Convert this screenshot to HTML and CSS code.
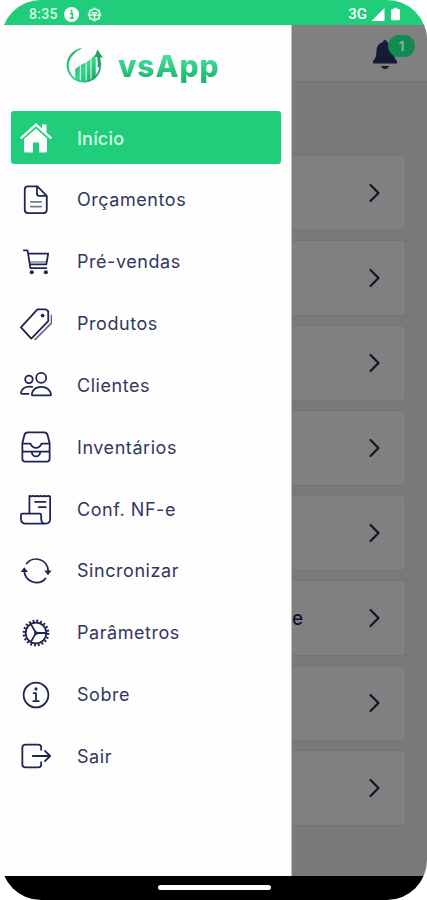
FILE: index.html
```html
<!DOCTYPE html>
<html lang="pt-BR">
<head>
    <meta charset="UTF-8">
    <meta name="viewport" content="width=device-width, initial-scale=1.0">
    <title>vsApp</title>
    <link rel="stylesheet" href="styles.css">
</head>
<body>
    <div class="phone">
        <header class="status-bar">
            <span class="time">8:35</span>
            <svg class="status-icon info" viewBox="0 0 16 16"><circle cx="8" cy="8" r="8" fill="#fff"/><path d="M6.3 6.7h2.5v5M6 12h4.5" stroke="#20cd7b" stroke-width="1.8" fill="none"/><circle cx="8" cy="4" r="1.2" fill="#20cd7b"/></svg>
            <svg class="status-icon" viewBox="0 0 16 16" fill="none" stroke="#e6fff2" stroke-width="1.6"><circle cx="8" cy="8" r="5.8"/><path d="M.8 8.500H6M10 8.500h5.200M8 10v5.500M5 6h6M8 .5v2M2.500 3l1.200 1.200M13.500 3l-1.200 1.200M2.500 13l1.200-1.200M13.500 13l-1.200-1.200"/><rect x="6.500" y="7.500" width="3" height="2.500" fill="#e6fff2" stroke="none"/></svg>
            <span class="network">3G</span>
            <svg class="signal" viewBox="0 0 14 14"><path d="M0 14L14 0v14z" fill="#fff"/></svg>
            <svg class="battery" viewBox="0 0 10 14"><path d="M3 0h4v1.500h1.500q1.500 0 1.500 1.500v9.500q0 1.500-1.500 1.500h-7Q0 14 0 12.500V3q0-1.500 1.500-1.500H3z" fill="#fff"/></svg>
        </header>

        <div class="screen">
            <aside class="drawer">
                <div class="brand">
                    <svg class="logo" viewBox="0 0 38 38">
                        <defs>
                            <linearGradient id="leaf" x1="0" y1="0" x2="1" y2="1">
                                <stop offset="0" stop-color="#17a967"/>
                                <stop offset=".5" stop-color="#35d88b"/>
                                <stop offset="1" stop-color="#179a60"/>
                            </linearGradient>
                        </defs>
                        <path d="M17 1A17.800 17.800 0 1 0 35.800 15l-2.300 0A15.600 15.600 0 1 1 8 7.500Q12 3 17 1z" fill="url(#leaf)"/>
                        <path d="M9.500 22.500l4.700-3.500v16l-4.700-2.500zM15.200 18.500l5-2.500v20.200l-5-1zM21.200 15.500l4-3v22.500l-4 1.200zM26.200 11.500l4.300-4v24l-4.300 3.200z" fill="url(#leaf)"/>
                        <path d="M29.500 10L32.200 2.500 38 11l-2.800-.6q1 6-1.200 10.600l-1.700-.5q.7-5-.3-10.300z" fill="#1ba468"/>
                    </svg>
                    <span class="brand-name">vsApp</span>
                </div>

                <nav class="menu">
                    <a class="item active">
                        <svg class="icon home" viewBox="0 0 32 32"><path d="M16 1l6 5.500V2.500h4.500v8L32 15.500 30.500 17.200 16 4.200 1.500 17.200 0 15.500z"/><path d="M16 6.500l11 10V29q0 1.500-1.500 1.500H19V20.500h-6v10H5.500Q4 30.500 4 29V17z"/></svg>
                        <span>Início</span>
                    </a>
                    <a class="item">
                        <svg class="icon" viewBox="0 0 32 32"><path d="M17.500 1.500H7.500Q4 1.500 4 5v21.500Q4 30 7.500 30h16.500q3.500 0 3.500-3.500V11.500zM17 1.500V9q0 2.500 2.500 2.500h8"/><path d="M10.500 18h11M10.500 23h11" opacity=".6"/></svg>
                        <span>Orçamentos</span>
                    </a>
                    <a class="item">
                        <svg class="icon" viewBox="0 0 32 32"><path d="M3 3.500h4l3 19h17M8 7h21l-2 11.500H9.500"/><path d="M10 16h17" opacity=".4"/><circle cx="11.500" cy="27" r="2.200" class="solid"/><circle cx="26.500" cy="27" r="2.200" class="solid"/></svg>
                        <span>Pré-vendas</span>
                    </a>
                    <a class="item">
                        <svg class="icon wide" viewBox="0 0 34 34"><path d="M18.500 1.500h9l2.500 2v10.500L12 32.500 1 20.500z"/><path d="M33.500 8v8L16 33.500" opacity=".7"/><circle cx="24" cy="8" r="2" class="solid"/></svg>
                        <span>Produtos</span>
                    </a>
                    <a class="item">
                        <svg class="icon wide" viewBox="0 0 34 34"><circle cx="22.500" cy="9.500" r="5.300"/><path d="M12.500 27q1.500-8 10-8t10.500 8q0 1-1.500 1H14q-1.500 0-1.500-1z"/><circle cx="9.500" cy="11" r="4"/><path d="M13 19Q3 17.500 1 25q0 1.500 1.500 1.500H9"/></svg>
                        <span>Clientes</span>
                    </a>
                    <a class="item">
                        <svg class="icon wide" viewBox="0 0 34 34"><path d="M2.500 13L4.500 5Q5 1.500 8.500 1.500h17Q29 1.500 29.500 5l2 8v7q0 2-2 2h-25q-2 0-2-2zM2.500 13.500H11q2 4.500 6 4.500t6-4.500h8.500M2.500 22v7.500q0 3 3 3h23q3 0 3-3V22M12.500 23q1 4 4.500 4t4.500-4"/></svg>
                        <span>Inventários</span>
                    </a>
                    <a class="item">
                        <svg class="icon wide" viewBox="0 0 34 34"><path d="M10 22V3l2 .6 2-.6 2 .6 2-.6 2 .6 2-.6 2 .6 2-.6 2 .6 2-.6 2 .6V28q0 4.500-4.500 4.500H6Q1.500 32.500 1 28v-4.500Q1 22 2.500 22H21q1.500 0 1.500 1.500V28q0 4.500 4.500 4.500"/><path d="M16 9.500h11M20 15h7.500"/></svg>
                        <span>Conf. NF-e</span>
                    </a>
                    <a class="item">
                        <svg class="icon wide" viewBox="0 0 34 34"><path d="M7 9a13 13 0 0 1 23 8M27 25A13 13 0 0 1 4.500 17"/><path d="M.8 18l3.700-5 4 5zM25.800 16.500l4 5 3.700-5z" class="solid"/></svg>
                        <span>Sincronizar</span>
                    </a>
                    <a class="item">
                        <svg class="icon" viewBox="0 0 32 32"><circle cx="16" cy="16" r="11"/><circle cx="16" cy="16" r="13" class="teeth"/><circle cx="16" cy="16" r="2" class="solid"/><path d="M16 16h11M16 16L10.500 6.500M16 16l-5.500 9.500"/></svg>
                        <span>Parâmetros</span>
                    </a>
                    <a class="item">
                        <svg class="icon" viewBox="0 0 32 32"><circle cx="16" cy="16" r="13.200"/><path d="M13.500 14H16v8.500M13 22.500h6"/><circle cx="16" cy="9.500" r="1.700" class="solid"/></svg>
                        <span>Sobre</span>
                    </a>
                    <a class="item">
                        <svg class="icon wide" viewBox="0 0 34 34"><path d="M22.500 10.500V8q0-3-3-3H6Q2.500 5 2.500 8v18q0 3 3.500 3h13.500q3 0 3-3v-2.500M13.500 17h18.500M26.500 11.500L32 17l-5.500 5.500"/></svg>
                        <span>Sair</span>
                    </a>
                </nav>
            </aside>

            <main class="page">
                <div class="topbar">
                    <div class="notifications">
                        <svg class="bell" viewBox="0 0 26 30"><path d="M13 0q2 0 2 2.200 6.500 1.300 6.500 8.800 0 7 3.500 10v2.500H1V21q3.500-3 3.500-10 0-7.500 6.500-8.800Q11 0 13 0z"/><path d="M9 26h8q-1 3-4 3t-4-3z"/></svg>
                        <span class="badge">1</span>
                    </div>
                </div>
                <div class="cards">
                    <div class="card"><svg class="chevron" viewBox="0 0 10 18"><path d="M1 1l8 8-8 8"/></svg></div>
                    <div class="card"><svg class="chevron" viewBox="0 0 10 18"><path d="M1 1l8 8-8 8"/></svg></div>
                    <div class="card"><svg class="chevron" viewBox="0 0 10 18"><path d="M1 1l8 8-8 8"/></svg></div>
                    <div class="card"><svg class="chevron" viewBox="0 0 10 18"><path d="M1 1l8 8-8 8"/></svg></div>
                    <div class="card"><svg class="chevron" viewBox="0 0 10 18"><path d="M1 1l8 8-8 8"/></svg></div>
                    <div class="card"><span class="card-title">e</span><svg class="chevron" viewBox="0 0 10 18"><path d="M1 1l8 8-8 8"/></svg></div>
                    <div class="card"><svg class="chevron" viewBox="0 0 10 18"><path d="M1 1l8 8-8 8"/></svg></div>
                    <div class="card"><svg class="chevron" viewBox="0 0 10 18"><path d="M1 1l8 8-8 8"/></svg></div>
                </div>
            </main>
        </div>

        <footer class="nav-bar"><span class="handle"></span></footer>
    </div>
</body>
</html>
```
FILE: styles.css
```css
* {
    margin: 0;
    padding: 0;
    box-sizing: border-box;
}

body {
    font-family: Inter, Roboto, sans-serif;
    background: #fff;
    color: #34375c;
}

svg {
    display: block;
    flex: none;
}

.phone {
    width: 426px;
    height: 900px;
    margin-left: 1px;
    display: flex;
    flex-direction: column;
    border-radius: 40px;
    overflow: hidden;
}

.status-bar {
    height: 25px;
    flex: none;
    display: flex;
    align-items: center;
    padding: 3px 27px 0 28px;
    background: #20cd7b;
    color: #fff;
    font-family: Roboto, sans-serif;
    font-size: 14px;
}

.time {
    width: 35px;
    color: #d5fbe6;
    font-weight: 500;
    letter-spacing: 0.3px;
}

.status-icon {
    width: 15px;
    height: 15px;
    margin-right: 8px;
}

.network {
    margin-left: auto;
    margin-right: 1px;
    font-size: 15px;
    font-weight: 500;
}

.signal {
    width: 14px;
    height: 13px;
    margin: 0 6px 0 3px;
}

.battery {
    width: 9px;
    height: 14px;
}

.screen {
    flex: 1;
    min-height: 0;
    display: flex;
}

.drawer {
    width: 291px;
    flex: none;
    background: #fdfdfd;
    border-right: 1px solid #bdbdbd;
}

.brand {
    height: 86px;
    display: flex;
    align-items: center;
    gap: 15px;
    padding: 0 0 5px 65px;
}

.logo {
    width: 37px;
    height: 37px;
}

.brand-name {
    font-size: 30px;
    font-weight: 800;
    letter-spacing: 0.9px;
    background: linear-gradient(#4be3a0 15%, #1cb871 85%);
    background-clip: text;
    -webkit-background-clip: text;
    color: transparent;
}

.menu {
    display: flex;
    flex-direction: column;
    gap: 8.85px;
    padding: 0 10px;
}

.item {
    height: 53px;
    display: flex;
    align-items: center;
    gap: 25px;
    padding: 1px 0 0 9px;
    border-radius: 3px;
    font-size: 18px;
    letter-spacing: 0.55px;
}

.active {
    background: #20cd7b;
    color: #d9fce9;
    font-weight: 500;
    letter-spacing: 0.2px;
}

.icon {
    width: 32px;
    height: 30px;
    fill: none;
    stroke: #202450;
    stroke-width: 1.9;
    stroke-linejoin: round;
    stroke-linecap: round;
}

.wide {
    height: 32px;
}

.home {
    height: 32px;
    fill: #fff;
    stroke: none;
}

.solid {
    fill: #202450;
    stroke: none;
}

.teeth {
    stroke-width: 2.6;
    stroke-linecap: butt;
    stroke-dasharray: 2 2.084;
}

.page {
    flex: 1;
    background: #797979;
}

.topbar {
    height: 57px;
    display: flex;
    justify-content: flex-end;
    padding: 15px 29px 0 0;
    background: #808080;
    border-bottom: 1px solid #737373;
}

.notifications {
    position: relative;
}

.bell {
    width: 26px;
    height: 30px;
    fill: #151b35;
}

.badge {
    position: absolute;
    left: 16px;
    top: -5px;
    width: 27px;
    height: 22px;
    border-radius: 11px;
    background: #138a52;
    color: #80b899;
    font-size: 13px;
    font-weight: 700;
    line-height: 22px;
    text-align: center;
}

.cards {
    display: flex;
    flex-direction: column;
    gap: 9px;
    padding: 73px 21px 0 0;
}

.card {
    height: 76px;
    display: flex;
    align-items: center;
    padding-right: 25px;
    background: #808080;
    border: 1px solid #727475;
    border-left: none;
    border-radius: 0 3px 3px 0;
}

.card-title {
    color: #121329;
    font-size: 19px;
    font-weight: 500;
}

.chevron {
    width: 11px;
    height: 18px;
    margin-left: auto;
    fill: none;
    stroke: #12142c;
    stroke-width: 2.2;
    stroke-linecap: round;
    stroke-linejoin: round;
    overflow: visible;
}

.nav-bar {
    height: 24px;
    flex: none;
    display: flex;
    justify-content: center;
    background: #000;
}

.handle {
    width: 113px;
    height: 5px;
    margin-top: 9px;
    border-radius: 3px;
    background: #fff;
}
```
